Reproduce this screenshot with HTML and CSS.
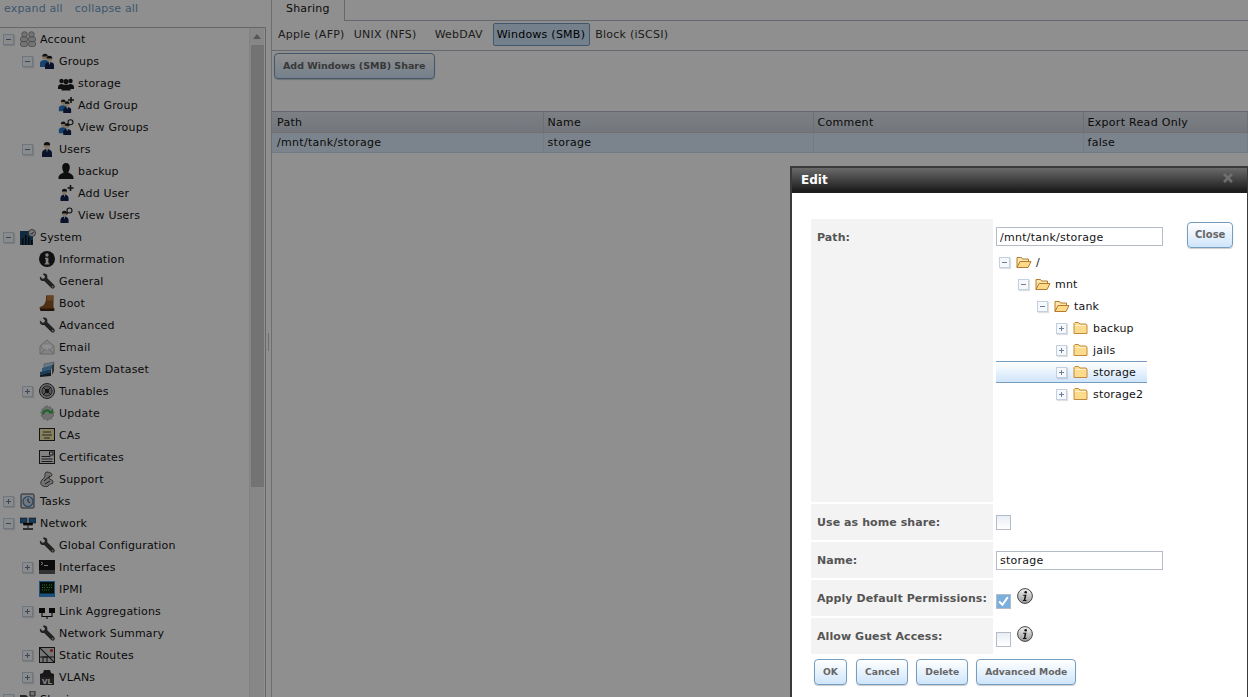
FILE: index.html
```html
<!DOCTYPE html>
<html lang="en">
<head>
<meta charset="utf-8">
<title>Sharing</title>
<link rel="stylesheet" href="styles.css">
</head>
<body>
<svg class="defs" aria-hidden="true">
  <symbol id="account" viewBox="0 0 16 16"><g fill="#cfcfcf" stroke="#777" stroke-width=".7"><circle cx="4.500" cy="3.500" r="2.800"/><circle cx="11.500" cy="3.500" r="2.800"/><rect x=".5" y="6" width="7" height="4.500" rx="1.500"/><rect x="8.500" y="6" width="7" height="4.500" rx="1.500"/><rect x=".5" y="10.500" width="7" height="5" rx="2"/><rect x="8.500" y="10.500" width="7" height="5" rx="2"/></g></symbol>
  <symbol id="groups" viewBox="0 0 16 16"><circle cx="6" cy="4" r="2.600" fill="#e6c6a0"/><path d="M3.200 3.500a2.800 2.800 0 0 1 5.600 0z" fill="#222"/><path d="M1 14V10c0-2 2-3 5-3s4 1 4 3v4z" fill="#2a78c8"/><circle cx="10.500" cy="6" r="2.600" fill="#eed2ae"/><path d="M7.700 5.500a2.800 2.800 0 0 1 5.600 0z" fill="#111"/><path d="M6 16v-4c0-2 2-3 4.500-3s4.500 1 4.500 3v4z" fill="#14234e"/><path d="M9.700 9h1.600l-.8 3z" fill="#fff"/></symbol>
  <symbol id="gblack" viewBox="0 0 16 16"><g fill="#1c1c1c"><circle cx="3.500" cy="6" r="2.200"/><circle cx="12.500" cy="6" r="2.200"/><path d="M0 14v-2c0-2 2-3 3.500-3s3.500 1 3.500 3v2z"/><path d="M9 14v-2c0-2 2-3 3.500-3s3.500 1 3.500 3v2z"/><circle cx="8" cy="6.500" r="2.600"/><path d="M3.500 15.500v-2.500c0-2.500 2.500-3.500 4.500-3.500s4.500 1 4.500 3.500v2.500z"/></g></symbol>
  <symbol id="gadd" viewBox="0 0 16 16"><use href="#groups" width="14" height="14" y="2"/><path d="M13 0v6M10 3h6" stroke="#222" stroke-width="1.600"/></symbol>
  <symbol id="gview" viewBox="0 0 16 16"><use href="#groups" width="14" height="14" y="2"/><circle cx="12.500" cy="3.200" r="2.500" fill="#fff" stroke="#222" stroke-width="1.100"/><path d="M11 5.200l-1.500 2" stroke="#222" stroke-width="1.200"/></symbol>
  <symbol id="user" viewBox="0 0 16 16"><circle cx="8" cy="4.500" r="3.100" fill="#eed2ae"/><path d="M4.800 4.200a3.200 3.200 0 0 1 6.400 0z" fill="#1b1b1b"/><path d="M3 16v-3.500c0-3 2.500-4.500 5-4.500s5 1.500 5 4.500v3.500z" fill="#14234e"/><path d="M7.200 8h1.600l-.8 3.500z" fill="#fff"/></symbol>
  <symbol id="ublack" viewBox="0 0 16 16"><path d="M8 0c2.500 0 3.800 2 3.800 4.200S10.600 9 10.200 9.600c1.800.8 5.300 2.200 5.300 5V16H.5v-1.400c0-2.800 3.500-4.200 5.300-5C5.400 9 4.200 6.400 4.200 4.200S5.500 0 8 0z" fill="#1a1a1a"/></symbol>
  <symbol id="uadd" viewBox="0 0 16 16"><use href="#user" x="0" y="3" width="13" height="13"/><path d="M12.500 0v6M9.500 3h6" stroke="#222" stroke-width="1.600"/></symbol>
  <symbol id="uview" viewBox="0 0 16 16"><use href="#user" x="0" y="3" width="13" height="13"/><circle cx="11.500" cy="3.500" r="2.500" fill="#fff" stroke="#222" stroke-width="1.100"/><path d="M10 5.500l-1.500 2" stroke="#222" stroke-width="1.200"/></symbol>
  <symbol id="system" viewBox="0 0 16 16"><rect y="2" width="13" height="14" fill="#1e4d70"/><path d="M2 16V9h1.500v7zM5 16V6h1.500v10zM8 16V8h1.500v8zM11 16v-5h1.500v5z" fill="#111"/><circle cx="12" cy="4" r="3.500" fill="#ddd" stroke="#444" stroke-width=".8"/><path d="M10.500 4l1.200 1.200 2-2.400" stroke="#333" fill="none"/></symbol>
  <symbol id="info" viewBox="0 0 16 16"><circle cx="8" cy="8" r="8" fill="#1e1e1e"/><circle cx="8" cy="4" r="1.700" fill="#eee"/><path d="M6 6.800h3.400v5.400h1v1.300H5.700v-1.300h1V8.100H6z" fill="#eee"/></symbol>
  <symbol id="wrench" viewBox="0 0 16 16"><path d="M1 3.500L3.400 5.800 5.500 5.300 6 3.300 3.700.9C6-.2 8.300 1 8.400 3.400c0 .7-.1 1.100-.3 1.600l7 7c.9.900.9 2 .1 2.900-.9.900-2 .9-2.900 0l-7.100-7C3 8.700.1 6.800 1 3.500z" fill="#3b3b3b"/><circle cx="13.600" cy="13.600" r=".9" fill="#ccc"/></symbol>
  <symbol id="boot" viewBox="0 0 16 16"><path d="M7 .5h7.500v11.500c1 .5 1 3-.5 3H2.500C.5 15 0 12.500 1.500 11.800 5 10.800 7.500 8 7 .5z" fill="#8a5424"/><path d="M8 .5h6.500v5H8z" fill="#b87a3c"/><path d="M.8 13.500h14.500V16H1.500z" fill="#3c2410"/></symbol>
  <symbol id="email" viewBox="0 0 16 16"><path d="M1 7l7-6 7 6v8H1z" fill="#ececec" stroke="#bcbcbc"/><path d="M3 5h10v4l-5 3-5-3z" fill="#fff" stroke="#c8c8c8" stroke-width=".7"/><path d="M1 15l5.500-5M15 15L9.500 10" stroke="#bbb"/></symbol>
  <symbol id="dataset" viewBox="0 0 16 16"><path d="M5 3l10-2v3L5 7z" fill="#bcd8ee" stroke="#557" stroke-width=".4"/><path d="M3 7l10-2.500v3L3 10.500z" fill="#5a9bd0"/><path d="M1 11l11-3v3L1 14z" fill="#2a6ea5"/><path d="M1 14l11-3v4L1 16z" fill="#203040"/><path d="M13 4l2-1v7l-2 4z" fill="#555"/></symbol>
  <symbol id="tunables" viewBox="0 0 16 16"><circle cx="8" cy="8" r="7.500" fill="#bdbdbd" stroke="#333"/><circle cx="8" cy="8" r="5" fill="#a0a0a0" stroke="#444"/><circle cx="8" cy="8" r="2.200" fill="#222"/><path d="M4 4l3 3M12 4L9 7M4 12l3-3M12 12L9 9" stroke="#222"/></symbol>
  <symbol id="update" viewBox="0 0 16 16"><path d="M8 .5l1.300 1.800 2.100-.8.5 2.200 2.200.2-.3 2.200 1.700 1.400-1.500 1.500.8 2-2 .9-.2 2.200-2.200-.1L8 15.500l-1.500-1.500-2.200.1-.2-2.200-2-.9.800-2-1.500-1.500L3.100 6.100 2.900 3.900l2.200-.2.500-2.200 2.100.8z" fill="#c8c8c8" stroke="#888" stroke-width=".5"/><path d="M4 9.500a4 4 0 0 1 7.500-2" fill="none" stroke="#37b24d" stroke-width="2.200"/><path d="M9.500 8.500h4.500V4z" fill="#37b24d"/></symbol>
  <symbol id="cas" viewBox="0 0 16 16"><rect x=".5" y="1.500" width="15" height="12" fill="#f2e6a8" stroke="#222"/><path d="M4 5h8M3 8h10M5 11h6" stroke="#444"/></symbol>
  <symbol id="cert" viewBox="0 0 16 16"><rect x=".5" y="1.500" width="15" height="13" fill="#e8e8e8" stroke="#222"/><path d="M2.500 7.500h9M2.500 10h11M2.500 12.500h11" stroke="#333"/><rect x="10.500" y="3" width="3.500" height="3" fill="#fff" stroke="#222"/></symbol>
  <symbol id="support" viewBox="0 0 16 16"><path d="M4 15c-3-1-3-5 0-7s1-5 3-7c3 0 6 1 6 3s-3 1-3 3 4 1 4 4-3 1-4 3-3 2-6 1z" fill="#ccc" stroke="#333" stroke-width=".8"/><path d="M5 10l6-5M6 13l5-3" stroke="#333"/></symbol>
  <symbol id="tasks" viewBox="0 0 16 16"><rect x="1" y="1" width="13" height="14" rx="1" fill="#dfe8f2" stroke="#444"/><circle cx="8" cy="8.500" r="5" fill="#c9d6e6" stroke="#4a7eb0" stroke-width="1.200"/><path d="M8 5.500v3l2.200 1.300" stroke="#333" fill="none"/></symbol>
  <symbol id="network" viewBox="0 0 16 16"><rect y="3" width="7" height="5" fill="#2a6ea5" stroke="#222" stroke-width=".6"/><rect x="9" y="3" width="7" height="5" fill="#2a6ea5" stroke="#222" stroke-width=".6"/><path d="M3.500 8v2h9V8M8 10v3" stroke="#333"/><rect x="3" y="13" width="10" height="2" fill="#555"/></symbol>
  <symbol id="iface" viewBox="0 0 16 16"><rect y="1" width="16" height="14" fill="#161616"/><rect y="11" width="16" height="4" fill="#5a5a5a"/><path d="M2 3l2 1.500L2 6M5 6.500h4" stroke="#ddd" fill="none"/></symbol>
  <symbol id="ipmi" viewBox="0 0 16 16"><rect x=".5" y=".5" width="15" height="15" fill="#0d1a0d" stroke="#2f8fd8"/><path d="M3 4h6M10 4h3M3 6.500h4M8 6.500h5M3 9h8" stroke="#45d045" stroke-dasharray="1 1"/><rect x="1" y="12.500" width="14" height="2.500" fill="#2f8fd8"/></symbol>
  <symbol id="lagg" viewBox="0 0 16 16"><rect y="5" width="6" height="5" fill="#111"/><rect x="10" y="5" width="6" height="5" fill="#111"/><path d="M3 10v3.500h10V10M8 13.500V16" stroke="#111" fill="none" stroke-width="1.100"/></symbol>
  <symbol id="routes" viewBox="0 0 16 16"><rect x=".5" y=".5" width="15" height="15" fill="#d4d4d4" stroke="#222"/><path d="M0 0l16 16M0 10h16" stroke="#222" stroke-width="1.100"/><rect x="4" y="10" width="4" height="5.500" fill="none" stroke="#222"/><circle cx="12.500" cy="3.500" r="1.500" fill="#d22"/></symbol>
  <symbol id="sharing" viewBox="0 0 16 16"><path d="M0 4h6l2 2h8v9H0z" fill="#444"/><path d="M10 0h5v5h-5z" fill="#ccc" stroke="#444"/></symbol>
  <symbol id="fopen" viewBox="0 0 16 16"><path d="M1 13.500V3.500h4.500l1 1.500h6v2.500" fill="#fbe6ae" stroke="#b57a2c"/><path d="M1 13.500l3-6h11l-3 6z" fill="#fdd98a" stroke="#b57a2c"/></symbol>
  <symbol id="fclosed" viewBox="0 0 16 16"><path d="M1 13.500v-10l1-1h3.500l1.500 1.500h6l1 1v8.500z" fill="#fddb8c" stroke="#c08a3a" stroke-linejoin="round"/><path d="M2 5.500h11" stroke="#fff2cc"/></symbol>
  <symbol id="hint" viewBox="0 0 16 16"><defs><linearGradient id="hintg" x1="0" y1="0" x2="0" y2="1"><stop offset="0" stop-color="#f2f2f2"/><stop offset="1" stop-color="#9a9a9a"/></linearGradient></defs><circle cx="8" cy="8" r="7.400" fill="url(#hintg)" stroke="#444"/><circle cx="8.700" cy="4.200" r="1.300" fill="#111"/><path d="M6.300 6.800h3.200l-1.200 5.200h1.200v.9H5.900v-.9h.9l.9-4.300H6.100z" fill="#111"/></symbol>
</svg>

<div class="layout">
  <aside class="side">
    <div class="side-links"><a class="link">expand all</a><a class="link">collapse all</a></div>
    <div class="tree-box">
      <div class="tree">
        <div class="row l0"><span class="exp minus"></span><svg class="ico"><use href="#account"/></svg><span>Account</span></div>
        <div class="row l1"><span class="exp minus"></span><svg class="ico"><use href="#groups"/></svg><span>Groups</span></div>
        <div class="row l2"><span class="exp none"></span><svg class="ico"><use href="#gblack"/></svg><span>storage</span></div>
        <div class="row l2"><span class="exp none"></span><svg class="ico"><use href="#gadd"/></svg><span>Add Group</span></div>
        <div class="row l2"><span class="exp none"></span><svg class="ico"><use href="#gview"/></svg><span>View Groups</span></div>
        <div class="row l1"><span class="exp minus"></span><svg class="ico"><use href="#user"/></svg><span>Users</span></div>
        <div class="row l2"><span class="exp none"></span><svg class="ico"><use href="#ublack"/></svg><span>backup</span></div>
        <div class="row l2"><span class="exp none"></span><svg class="ico"><use href="#uadd"/></svg><span>Add User</span></div>
        <div class="row l2"><span class="exp none"></span><svg class="ico"><use href="#uview"/></svg><span>View Users</span></div>
        <div class="row l0"><span class="exp minus"></span><svg class="ico"><use href="#system"/></svg><span>System</span></div>
        <div class="row l1"><span class="exp none"></span><svg class="ico"><use href="#info"/></svg><span>Information</span></div>
        <div class="row l1"><span class="exp none"></span><svg class="ico"><use href="#wrench"/></svg><span>General</span></div>
        <div class="row l1"><span class="exp none"></span><svg class="ico"><use href="#boot"/></svg><span>Boot</span></div>
        <div class="row l1"><span class="exp none"></span><svg class="ico"><use href="#wrench"/></svg><span>Advanced</span></div>
        <div class="row l1"><span class="exp none"></span><svg class="ico"><use href="#email"/></svg><span>Email</span></div>
        <div class="row l1"><span class="exp none"></span><svg class="ico"><use href="#dataset"/></svg><span>System Dataset</span></div>
        <div class="row l1"><span class="exp plus"></span><svg class="ico"><use href="#tunables"/></svg><span>Tunables</span></div>
        <div class="row l1"><span class="exp none"></span><svg class="ico"><use href="#update"/></svg><span>Update</span></div>
        <div class="row l1"><span class="exp none"></span><svg class="ico"><use href="#cas"/></svg><span>CAs</span></div>
        <div class="row l1"><span class="exp none"></span><svg class="ico"><use href="#cert"/></svg><span>Certificates</span></div>
        <div class="row l1"><span class="exp none"></span><svg class="ico"><use href="#support"/></svg><span>Support</span></div>
        <div class="row l0"><span class="exp plus"></span><svg class="ico"><use href="#tasks"/></svg><span>Tasks</span></div>
        <div class="row l0"><span class="exp minus"></span><svg class="ico"><use href="#network"/></svg><span>Network</span></div>
        <div class="row l1"><span class="exp none"></span><svg class="ico"><use href="#wrench"/></svg><span>Global Configuration</span></div>
        <div class="row l1"><span class="exp plus"></span><svg class="ico"><use href="#iface"/></svg><span>Interfaces</span></div>
        <div class="row l1"><span class="exp none"></span><svg class="ico"><use href="#ipmi"/></svg><span>IPMI</span></div>
        <div class="row l1"><span class="exp plus"></span><svg class="ico"><use href="#lagg"/></svg><span>Link Aggregations</span></div>
        <div class="row l1"><span class="exp none"></span><svg class="ico"><use href="#wrench"/></svg><span>Network Summary</span></div>
        <div class="row l1"><span class="exp plus"></span><svg class="ico"><use href="#routes"/></svg><span>Static Routes</span></div>
        <div class="row l1"><span class="exp plus"></span><svg class="ico" viewBox="0 0 16 16"><path d="M1 5l3-1 1-3h6l1 3 3 1v11H1z" fill="#2b2b2b"/><rect x="1" y="8" width="14" height="8" fill="#3a3a3a"/><text x="3" y="14.500" class="vl-mark">VL</text></svg><span>VLANs</span></div>
        <div class="row l0"><span class="exp minus"></span><svg class="ico"><use href="#sharing"/></svg><span>Sharing</span></div>
      </div>
      <div class="scrollbar">
        <div class="scroll-arrow"></div>
        <div class="scroll-thumb"></div>
      </div>
    </div>
  </aside>
  <div class="splitter"><span class="grip"></span></div>
  <main class="main">
    <div class="tabstrip"><div class="tab">Sharing</div></div>
    <div class="subtabs">
      <span class="subtab">Apple (AFP)</span>
      <span class="subtab">UNIX (NFS)</span>
      <span class="subtab webdav">WebDAV</span>
      <span class="subtab active">Windows (SMB)</span>
      <span class="subtab block">Block (iSCSI)</span>
    </div>
    <div class="toolbar"><button class="btn">Add Windows (SMB) Share</button></div>
    <table class="grid">
      <colgroup><col class="c1"><col class="c2"><col class="c3"><col class="c4"></colgroup>
      <thead><tr><th>Path</th><th>Name</th><th>Comment</th><th>Export Read Only</th></tr></thead>
      <tbody><tr><td>/mnt/tank/storage</td><td>storage</td><td></td><td>false</td></tr></tbody>
    </table>
  </main>
</div>

<div class="overlay"></div>

<section class="dialog">
  <header class="dialog-title"><span>Edit</span>
    <svg class="dialog-x" viewBox="0 0 10 10"><path d="M1 1l8 8M9 1l-8 8" stroke="#6f6f6f" stroke-width="2.600"/></svg>
  </header>
  <div class="dialog-body">
    <div class="form">
      <div class="label path-label">Path:</div>
      <div class="path-cell">
        <div class="path-col">
          <input class="text" value="/mnt/tank/storage">
          <div class="ftree">
            <div class="frow d0"><span class="exp minus"></span><svg class="ico"><use href="#fopen"/></svg><span>/</span></div>
            <div class="frow d1"><span class="exp minus"></span><svg class="ico"><use href="#fopen"/></svg><span>mnt</span></div>
            <div class="frow d2"><span class="exp minus"></span><svg class="ico"><use href="#fopen"/></svg><span>tank</span></div>
            <div class="frow d3"><span class="exp plus"></span><svg class="ico"><use href="#fclosed"/></svg><span>backup</span></div>
            <div class="frow d3"><span class="exp plus"></span><svg class="ico"><use href="#fclosed"/></svg><span>jails</span></div>
            <div class="frow d3 selected"><span class="exp plus"></span><svg class="ico"><use href="#fclosed"/></svg><span>storage</span></div>
            <div class="frow d3"><span class="exp plus"></span><svg class="ico"><use href="#fclosed"/></svg><span>storage2</span></div>
          </div>
        </div>
        <button class="btn close-btn">Close</button>
      </div>
      <div class="label">Use as home share:</div>
      <div class="value"><span class="check"></span></div>
      <div class="label">Name:</div>
      <div class="value"><input class="text" value="storage"></div>
      <div class="label">Apply Default Permissions:</div>
      <div class="value"><span class="check low checked"><svg viewBox="0 0 12 12"><path d="M2 6l3 3 5-7" fill="none" stroke="#fff" stroke-width="1.800"/></svg></span><svg class="hint"><use href="#hint"/></svg></div>
      <div class="label">Allow Guest Access:</div>
      <div class="value"><span class="check low"></span><svg class="hint"><use href="#hint"/></svg></div>
    </div>
    <div class="actions">
      <button class="btn">OK</button>
      <button class="btn">Cancel</button>
      <button class="btn">Delete</button>
      <button class="btn">Advanced Mode</button>
    </div>
  </div>
</section>
</body>
</html>
```
FILE: styles.css
```css
* { box-sizing: border-box; }
html, body { margin: 0; height: 697px; overflow: hidden; background: #fff; }
body { font: 11px "DejaVu Sans", sans-serif; color: #131313; position: relative; letter-spacing: .17px; }
.defs { position: absolute; width: 0; height: 0; overflow: hidden; }
.vl-mark { font: 700 7px "DejaVu Sans", sans-serif; fill: #eee; letter-spacing: 0; }

.layout { display: flex; height: 697px; }
.side { width: 266px; flex: none; display: flex; flex-direction: column; }
.side-links { height: 27px; padding: 2px 0 0 4px; display: flex; gap: 12px; line-height: 14px; }
.link { color: #6f9bc8; font-size: 11px; }
.tree-box { flex: 1; min-height: 0; display: flex; border-top: 1px solid #b8b8b8; border-right: 1px solid #b8b8b8; }
.tree { flex: 1; overflow: hidden; min-width: 0; }
.row { height: 22px; display: flex; align-items: center; white-space: nowrap; }
.l0 { padding-left: 3px; }
.l1 { padding-left: 22px; }
.l2 { padding-left: 41px; }
.exp { width: 11px; height: 11px; margin-right: 6px; flex: none; position: relative; }
.minus, .plus { border: 1px solid #c3d0e0; background: #f6f8fb; box-shadow: 1px 1px 1px rgba(0,0,0,.12); }
.minus::before, .plus::before { content: ""; position: absolute; left: 2px; top: 4px; width: 5px; height: 1px; background: #6a7f9a; }
.plus::after { content: ""; position: absolute; left: 4px; top: 2px; width: 1px; height: 5px; background: #6a7f9a; }
.ico { width: 16px; height: 16px; margin-right: 4px; flex: none; }
.scrollbar { width: 15px; flex: none; border-left: 1px solid #e8e8e8; margin-right: 1px; display: flex; flex-direction: column; background: #f0f0f0; }
.scroll-arrow { height: 17px; position: relative; background: #f0f0f0; }
.scroll-arrow::after { content: ""; position: absolute; left: 3px; top: 6px; border: 4px solid transparent; border-top: 0; border-bottom: 5px solid #9a9a9a; }
.scroll-thumb { height: 442px; background: #cdcdcd; margin-left: 1px; }

.splitter { width: 5px; flex: none; display: flex; align-items: center; justify-content: center; padding-bottom: 14px; }
.grip { width: 1px; height: 18px; background: #c4c4c4; box-shadow: 1px 0 0 #fff; }

.main { flex: 1; min-width: 0; border-left: 1px solid #c4c4c4; }
.tabstrip { height: 21px; border-bottom: 1px solid #b5bcc7; display: flex; }
.tab { width: 73px; height: 21px; padding: 2px 0 0 14px; background: #fff; border-right: 1px solid #b5bcc7; line-height: 14px; letter-spacing: .2px; }
.subtabs { height: 30px; border-bottom: 1px solid #b5bcc7; display: flex; align-items: flex-start; padding: 2px 0 0 2px; letter-spacing: .25px; }
.subtab { height: 23px; line-height: 21px; padding: 0 4px 0 3px; border: 1px solid transparent; white-space: nowrap; color: #333; }
.subtab.webdav { margin-left: 9px; }
.subtab.active { margin-left: 5px; background: #cfe5fa; border-color: #759dc0; border-radius: 2px; color: #000; }
.subtab.block { margin-left: 1px; }
.toolbar { height: 61px; padding: 2px 0 0 2px; border-bottom: 1px solid #b5bcc7; }
.btn { font: bold 9.5px "DejaVu Sans", sans-serif; letter-spacing: 0; color: #666; height: 26px; padding: 0 8px 1px; border: 1px solid #759dc0; border-radius: 4px; background: linear-gradient(#fff, #cfe5fa); box-shadow: 0 1px 1px rgba(0,0,0,.2); white-space: nowrap; }
.grid { border-collapse: collapse; table-layout: fixed; width: 975px; letter-spacing: .3px; }
.c1 { width: 271px; } .c2 { width: 270px; } .c3 { width: 270px; } .c4 { width: 164px; }
.grid th { height: 20px; font-weight: 400; text-align: left; padding: 2px 4px 0; background: linear-gradient(#dfe4ea, #cdd4dd); border-bottom: 1px solid #c4c8ce; border-right: 1px solid #c4c8ce; }
.grid td { height: 20px; padding: 0 4px; background: #dbebfa; border-right: 1px solid #cfdbe6; border-bottom: 1px solid #cfdbe6; }
.grid th:first-child, .grid td:first-child { padding-left: 5px; }

.overlay { position: absolute; inset: 0; background: rgba(0,0,0,.44); }

.dialog { position: absolute; left: 790px; top: 166px; width: 458px; height: 560px; background: #fff; border: 2px solid #3a3a3a; border-right-width: 1px; border-top-width: 2px; }
.dialog-title { height: 25px; background: linear-gradient(#6a6a6a, #1e1e1e 90%); color: #fff; font: bold 12px/24px "DejaVu Sans", sans-serif; letter-spacing: 0; padding: 0 14px 1px 9px; display: flex; justify-content: space-between; align-items: center; }
.dialog-x { width: 10px; height: 10px; margin-top: -4px; }
.dialog-body { padding: 26px 0 0 19px; }
.form { display: grid; grid-template-columns: 182px 1fr; grid-template-rows: 283px 36px 36px 36px 36px; row-gap: 2px; column-gap: 3px; }
.label { background: #f3f3f3; font-weight: 700; color: #555; padding-left: 6px; display: flex; align-items: center; white-space: nowrap; letter-spacing: .08px; }
.path-label { align-items: flex-start; padding-top: 12px; }
.path-cell { display: flex; align-items: flex-start; }
.path-col { width: 167px; padding-top: 8px; }
.close-btn { margin: 3px 0 0 24px; flex: none; padding: 0 7px 1px; font-size: 10px; }
.text { display: block; width: 167px; height: 19px; border: 1px solid #b5bcc7; padding: 1px 3px 0; font: 11px "DejaVu Sans", sans-serif; letter-spacing: .25px; color: #131313; background: #fff; }
.ftree { margin-top: 5px; width: 151px; }
.frow { height: 22px; display: flex; align-items: center; white-space: nowrap; }
.d0 { padding-left: 3px; } .d1 { padding-left: 22px; } .d2 { padding-left: 41px; } .d3 { padding-left: 60px; }
.selected { background: linear-gradient(#fff, #cfe5fa); border-top: 1px solid #769dc0; border-bottom: 1px solid #769dc0; }
.value { display: flex; align-items: center; }
.check { width: 15px; height: 15px; border: 1px solid #b5bcc7; background: linear-gradient(#e8eef5, #fff); display: block; flex: none; }
.check.low { margin-top: 6px; }
.check.checked { background: #79aede; }
.check svg { display: block; width: 13px; height: 13px; }
.hint { width: 16px; height: 16px; margin: -4px 0 0 6px; flex: none; }
.actions { display: flex; gap: 8px; padding: 5px 0 0 3px; }
.actions .btn { padding: 0 8px 1px; font-size: 9.2px; }
.actions .btn:first-child { width: 33px; padding: 0 0 1px; margin-right: 1px; }
```
